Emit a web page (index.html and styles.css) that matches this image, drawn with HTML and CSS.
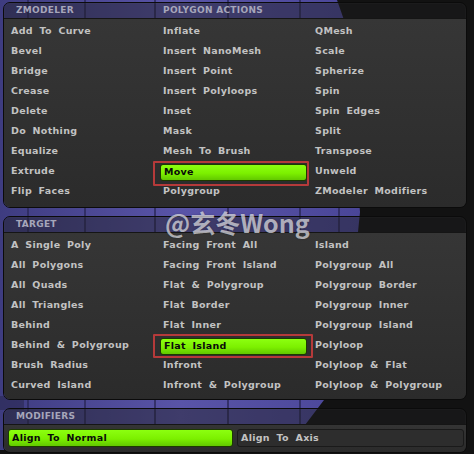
FILE: index.html
```html
<!DOCTYPE html>
<html>
<head>
<meta charset="utf-8">
<link rel="stylesheet" href="styles.css">
</head>
<body>
<div class="backdrop">
  <svg width="474" height="454" viewBox="0 0 474 454">
    <defs>
      <linearGradient id="pg" x1="0" y1="0" x2="1" y2="0">
        <stop offset="0" stop-color="#3e3c80"/>
        <stop offset="0.5" stop-color="#5954a8"/>
        <stop offset="1" stop-color="#4a4698"/>
      </linearGradient>
    </defs>
    <polygon points="0,0 337,0 344,20 360,212 358,232 324,400 305,425 290,450 0,450" fill="url(#pg)"/>
    <g stroke="#2c2a5c" stroke-width="2" opacity="0.8">
      <line x1="28" y1="0" x2="28" y2="450"/>
      <line x1="85" y1="0" x2="85" y2="450"/>
      <line x1="155" y1="0" x2="155" y2="450"/>
      <line x1="228" y1="0" x2="228" y2="450"/>
      <line x1="300" y1="0" x2="300" y2="450"/>
      <line x1="339" y1="200" x2="339" y2="240"/>
    </g>
    <rect x="0" y="396" width="24" height="14" fill="#2a2850" opacity="0.6"/>
  </svg>
</div>

<div class="stack">
  <section class="panel p1">
    <div class="head cols">
      <span class="hl">ZMODELER</span>
      <span class="hl h2">POLYGON ACTIONS</span>
    </div>
    <div class="grid rows9">
      <span class="c">Add To Curve</span>
      <span class="c">Bevel</span>
      <span class="c">Bridge</span>
      <span class="c">Crease</span>
      <span class="c">Delete</span>
      <span class="c">Do Nothing</span>
      <span class="c">Equalize</span>
      <span class="c">Extrude</span>
      <span class="c">Flip Faces</span>

      <span class="c">Inflate</span>
      <span class="c">Insert NanoMesh</span>
      <span class="c">Insert Point</span>
      <span class="c">Insert Polyloops</span>
      <span class="c">Inset</span>
      <span class="c">Mask</span>
      <span class="c">Mesh To Brush</span>
      <span class="c marked"><span class="on">Move</span></span>
      <span class="c">Polygroup</span>

      <span class="c">QMesh</span>
      <span class="c">Scale</span>
      <span class="c">Spherize</span>
      <span class="c">Spin</span>
      <span class="c">Spin Edges</span>
      <span class="c">Split</span>
      <span class="c">Transpose</span>
      <span class="c">Unweld</span>
      <span class="c">ZModeler Modifiers</span>
    </div>
  </section>

  <section class="panel p2">
    <div class="head cols">
      <span class="hl">TARGET</span>
    </div>
    <div class="grid rows8">
      <span class="c">A Single Poly</span>
      <span class="c">All Polygons</span>
      <span class="c">All Quads</span>
      <span class="c">All Triangles</span>
      <span class="c">Behind</span>
      <span class="c">Behind &amp; Polygroup</span>
      <span class="c">Brush Radius</span>
      <span class="c">Curved Island</span>

      <span class="c">Facing Front All</span>
      <span class="c">Facing Front Island</span>
      <span class="c">Flat &amp; Polygroup</span>
      <span class="c">Flat Border</span>
      <span class="c">Flat Inner</span>
      <span class="c marked m2"><span class="on">Flat Island</span></span>
      <span class="c">Infront</span>
      <span class="c">Infront &amp; Polygroup</span>

      <span class="c">Island</span>
      <span class="c">Polygroup All</span>
      <span class="c">Polygroup Border</span>
      <span class="c">Polygroup Inner</span>
      <span class="c">Polygroup Island</span>
      <span class="c">Polyloop</span>
      <span class="c">Polyloop &amp; Flat</span>
      <span class="c">Polyloop &amp; Polygroup</span>
    </div>
  </section>

  <section class="panel p3">
    <div class="head cols">
      <span class="hl">MODIFIERS</span>
    </div>
    <div class="mods">
      <span class="btn on-btn">Align To Normal</span>
      <span class="btn">Align To Axis</span>
    </div>
  </section>
</div>

<div class="mark">@玄冬Wong</div>
</body>
</html>
```

FILE: styles.css
```css
html, body {
  margin: 0;
  padding: 0;
  width: 474px;
  height: 454px;
  overflow: hidden;
  background: #121212;
}

body {
  position: relative;
  font-family: "DejaVu Sans", "Noto Sans CJK SC", sans-serif;
}

.backdrop {
  position: absolute;
  left: 0;
  top: 0;
  width: 474px;
  height: 454px;
  z-index: 0;
}

.backdrop svg {
  display: block;
}

.stack {
  position: relative;
  z-index: 1;
  display: flex;
  flex-direction: column;
  gap: 8px;
  padding: 2px 7px 0 3px;
}

.panel {
  border: 1px solid #0b0b0b;
  border-radius: 7px;
  overflow: hidden;
  box-shadow: inset 0 0 0 1px rgba(255,255,255,0.03);
}

.head {
  height: 15px;
  background: rgba(30, 30, 34, 0.45);
  border-bottom: 1px solid #151515;
}

.cols {
  display: grid;
  grid-template-columns: repeat(3, 152px);
  padding: 0 0 0 1px;
}

.hl {
  font-size: 9px;
  font-weight: bold;
  letter-spacing: 0.3px;
  color: #a6a6ba;
  line-height: 15px;
  padding-left: 11px;
}

.hl.h2 {
  padding-left: 6px;
}

.grid {
  display: grid;
  grid-template-columns: repeat(3, 152px);
  grid-auto-flow: column;
  padding: 2px 0 6px 0;
  background: linear-gradient(#363636, #2b2b2b);
}

.rows9 {
  grid-template-rows: repeat(9, 20px);
}

.rows8 {
  grid-template-rows: repeat(8, 20px);
  padding-bottom: 4px;
}

.c {
  display: block;
  height: 20px;
  line-height: 20px;
  padding-left: 7px;
  font-size: 9.5px;
  font-weight: bold;
  letter-spacing: 0.3px;
  word-spacing: 3px;
  color: #c2c2c2;
  white-space: nowrap;
}

.c.marked {
  position: relative;
  padding-left: 0;
}

.c.marked::after {
  content: "";
  position: absolute;
  left: -3px;
  top: 0;
  right: -1px;
  bottom: -5px;
  border: 2px solid #b53a3a;
  border-radius: 1px;
}

.c.m2::after {
  top: -1px;
  bottom: -3px;
  right: -5px;
}

.on, .btn.on-btn {
  display: block;
  box-sizing: border-box;
  background: linear-gradient(#8cff10, #7cf000 55%, #62c800);
  border: 1px solid #1d3a00;
  border-radius: 3px;
  color: #0a0a0a;
}

.on {
  height: 17px;
  margin: 3px 1px 0 4px;
  padding-left: 3px;
  line-height: 14px;
}

.mods {
  display: flex;
  gap: 4px;
  padding: 4px 2px 5px 4px;
  background: linear-gradient(#343434, #2b2b2b);
}

.btn {
  box-sizing: border-box;
  height: 18px;
  line-height: 16px;
  flex: 1;
  padding-left: 3px;
  font-size: 9.5px;
  font-weight: bold;
  letter-spacing: 0.3px;
  word-spacing: 3px;
  color: #c2c2c2;
  border: 1px solid #1a1a1a;
  border-radius: 3px;
  background: #2d2d2d;
  white-space: nowrap;
}

.btn.on-btn {
  flex: 0 0 225px;
}

.mark {
  position: absolute;
  left: 165px;
  top: 205px;
  z-index: 2;
  font-family: "Noto Sans CJK SC", "Noto Sans", sans-serif;
  font-weight: bold;
  font-size: 25px;
  line-height: 34px;
  color: rgba(225, 225, 230, 0.72);
  text-shadow: 0 0 2px rgba(0,0,0,0.25);
}
```
